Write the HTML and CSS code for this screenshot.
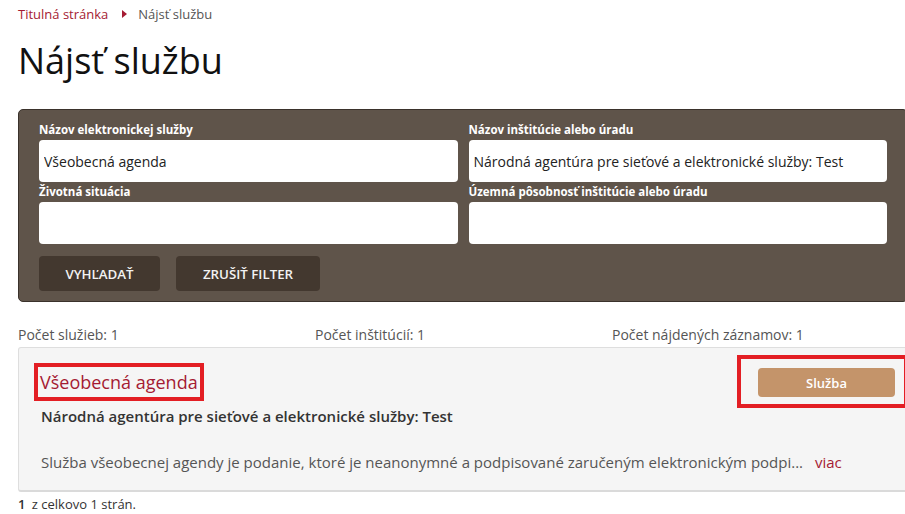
FILE: index.html
```html
<!DOCTYPE html>
<html lang="sk">
<head>
  <meta charset="UTF-8">
  <meta name="viewport" content="width=device-width, initial-scale=1.0">
  <title>Nájsť službu</title>
  <link rel="stylesheet" href="styles.css">
</head>
<body>
  <div class="page">
    <nav class="breadcrumb">
      <a href="#">Titulná stránka</a>
      <span class="crumb-arrow"></span>
      <span>Nájsť službu</span>
    </nav>
    <h1>Nájsť službu</h1>

    <form class="filter">
      <div class="filter-grid">
        <div class="field">
          <label>Názov elektronickej služby</label>
          <input type="text" value="Všeobecná agenda">
        </div>
        <div class="field">
          <label>Názov inštitúcie alebo úradu</label>
          <input type="text" value="Národná agentúra pre sieťové a elektronické služby: Test">
        </div>
        <div class="field">
          <label>Životná situácia</label>
          <input type="text">
        </div>
        <div class="field">
          <label>Územná pôsobnosť inštitúcie alebo úradu</label>
          <input type="text">
        </div>
      </div>
      <div class="filter-buttons">
        <button type="button" class="btn-dark">VYHĽADAŤ</button>
        <button type="button" class="btn-dark wide">ZRUŠIŤ FILTER</button>
      </div>
    </form>

    <div class="counts">
      <span>Počet služieb: 1</span>
      <span>Počet inštitúcií: 1</span>
      <span>Počet nájdených záznamov: 1</span>
    </div>

    <div class="result">
      <div class="result-head">
        <a href="#" class="result-title">Všeobecná agenda</a>
        <div class="marked">
          <button type="button" class="btn-service">Služba</button>
        </div>
      </div>
      <div class="result-org">Národná agentúra pre sieťové a elektronické služby: Test</div>
      <p class="result-desc">Služba všeobecnej agendy je podanie, ktoré je neanonymné a podpisované zaručeným elektronickým podpi... <a href="#">viac</a></p>
    </div>

    <div class="pager"><b>1</b> z celkovo 1 strán.</div>
  </div>
</body>
</html>
```

FILE: styles.css
```css
html, body {
  overflow: hidden;
}
body {
  margin: 0;
  font-family: "Open Sans", "Noto Sans", sans-serif;
  color: #333;
  background: #fff;
}
.page {
  width: 890px;
  margin-left: 18px;
}
a {
  color: #a51b33;
  text-decoration: none;
}
.breadcrumb {
  display: flex;
  align-items: center;
  font-size: 13px;
  line-height: 18px;
  padding-top: 5px;
  color: #555;
}
.crumb-arrow {
  width: 0;
  height: 0;
  border-top: 4px solid transparent;
  border-bottom: 4px solid transparent;
  border-left: 5px solid #a51b33;
  margin: 0 11px 0 14px;
}
h1 {
  margin: 13px 0 0;
  font-size: 36px;
  font-weight: 400;
  line-height: 50px;
  color: #111;
}
.filter {
  margin-top: 23px;
  background: #5f544a;
  border: 1px solid #3a322b;
  border-radius: 5px;
  padding: 12px 20px 10px;
}
.filter-grid {
  display: grid;
  grid-template-columns: 1fr 1fr;
  column-gap: 11px;
  row-gap: 2px;
}
.field label {
  display: block;
  font-size: 11.5px;
  font-weight: 700;
  color: #fff;
  line-height: 16px;
  margin-bottom: 2px;
}
.field input {
  display: block;
  width: 100%;
  box-sizing: border-box;
  height: 42px;
  border: 0;
  border-radius: 4px;
  padding: 0 5px;
  font-family: inherit;
  font-size: 14px;
  color: #222;
}
.filter-buttons {
  display: flex;
  gap: 16px;
  margin-top: 12px;
}
.btn-dark {
  height: 35px;
  width: 121px;
  border: 0;
  border-radius: 4px;
  background: #43382f;
  color: #f2f2f2;
  font-family: inherit;
  font-size: 13.3px;
  font-weight: 600;
}
.btn-dark.wide {
  width: 144px;
}
.counts {
  display: grid;
  grid-template-columns: repeat(3, 297px);
  font-size: 14px;
  color: #555;
  line-height: 18px;
  margin-top: 24px;
}
.result {
  margin-top: 3px;
  background: #f5f5f5;
  border: 1px solid #dedede;
  border-bottom: 2px solid #dadada;
  border-radius: 3px;
  padding: 7px 12px 0 22px;
  height: 135px;
}
.result-head {
  display: flex;
  justify-content: space-between;
  align-items: flex-start;
}
.result-title {
  margin-top: 12px;
  font-size: 18px;
  line-height: 30px;
  outline: 4px solid #e31e24;
  padding: 0 2px;
  margin-left: -3px;
}
.marked {
  border: 4px solid #e31e24;
  padding: 9px 9px 7px 17px;
  margin-right: -13px;
}
.btn-service {
  display: block;
  width: 137px;
  height: 29px;
  border: 0;
  border-radius: 4px;
  background: #c4946a;
  color: #fff;
  font-family: inherit;
  font-size: 13px;
  font-weight: 600;
}
.result-org {
  font-size: 15px;
  font-weight: 600;
  color: #333;
  line-height: 20px;
  margin-top: -2px;
}
.result-desc {
  margin: 26px 0 0;
  font-size: 15px;
  line-height: 20px;
  color: #555;
}
.result-desc a {
  margin-left: 8px;
}
.pager {
  font-size: 13px;
  color: #333;
  margin-top: 3px;
  line-height: 18px;
}
.pager b {
  font-weight: 600;
  margin-right: 3px;
}
```
